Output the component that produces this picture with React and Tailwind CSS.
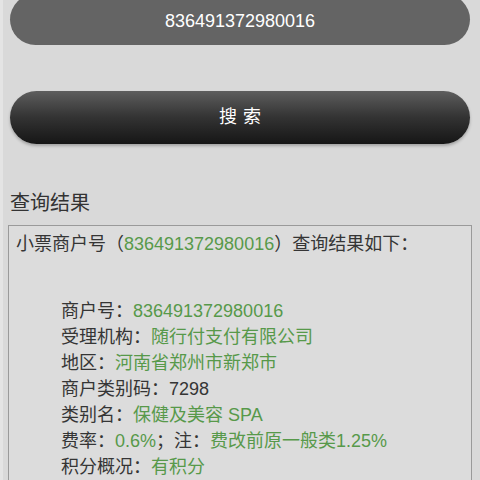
// Merchant code lookup result page

const font = { fontFamily: '"Liberation Sans", "Noto Sans CJK SC", sans-serif' };

const rows = [
  { label: '商户号：', value: '836491372980016', green: true },
  { label: '受理机构：', value: '随行付支付有限公司', green: true },
  { label: '地区：', value: '河南省郑州市新郑市', green: true },
  { label: '商户类别码：', value: '7298', green: false },
  { label: '类别名：', value: '保健及美容 SPA', green: true },
];

export default function App() {
  return (
    <div
      className="w-[480px] h-[480px] overflow-hidden bg-[#d9d9d9] border-l-[3px] border-[#e4e4e4] text-[#353535]"
      style={font}
    >
      <div className="pl-[7px] pr-[10px]">
        {/* query input */}
        <div className="-mt-[6px] h-[51px] rounded-full bg-[#646464] flex items-center justify-center pt-[4px]">
          <span className="text-white text-[18px]">836491372980016</span>
        </div>

        {/* search button */}
        <div className="mt-[46px] h-[53px] rounded-full bg-gradient-to-b from-[#5e5e5e] via-[#333333] to-[#161616] shadow-[0_2px_3px_rgba(0,0,0,0.25)] flex items-center justify-center">
          <span className="text-white text-[18px] tracking-[6px] pl-[6px]">搜索</span>
        </div>

        <div className="mt-[45px] text-[20px] leading-[28px] text-[#333]">查询结果</div>
      </div>

      <div className="mt-[8px] ml-[5px] mr-[8px] border border-[#9a9a9a] bg-[#dcdcdc] pt-[5px] pl-[7px] h-[300px] text-[18px] leading-[26px]">
        <div>
          小票商户号（<span className="text-[#57994a]">836491372980016</span>）查询结果如下：
        </div>
        <div className="mt-[41px] pl-[45px]">
          {rows.map((r) => (
            <div key={r.label}>
              {r.label}
              <span className={r.green ? 'text-[#57994a]' : ''}>{r.value}</span>
            </div>
          ))}
          <div>
            费率：<span className="text-[#57994a]">0.6%</span>；注：
            <span className="text-[#57994a]">费改前原一般类1.25%</span>
          </div>
          <div>
            积分概况：<span className="text-[#57994a]">有积分</span>
          </div>
        </div>
      </div>
    </div>
  );
}
